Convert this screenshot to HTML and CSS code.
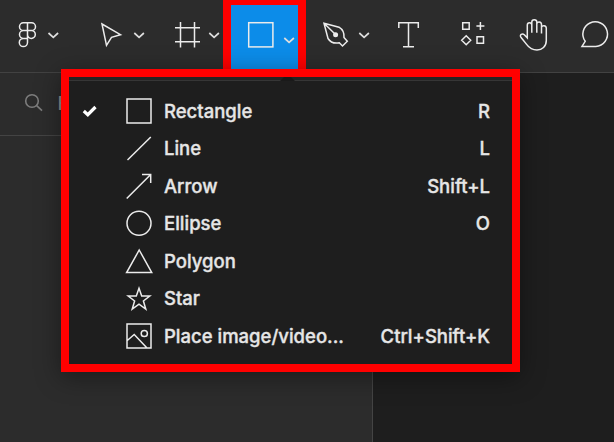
FILE: index.html
```html
<!DOCTYPE html>
<html lang="en">
<head>
<meta charset="utf-8">
<title>Shape tools</title>
<link rel="stylesheet" href="styles.css">
</head>
<body>
<div class="app">
  <header class="toolbar">
    <div class="tool tool-main"><svg width="80" height="72" viewBox="0 0 80 72"><path d="M27.500 22.800H23.400a3.900 3.900 0 0 0 0 7.800h8.200a3.900 3.900 0 0 0 0-7.800ZM27.500 22.800V42.500a4.100 4.100 0 1 1-4.100-4.100h4.100M27.500 30.600h-4.100a3.900 3.900 0 0 0 0 7.800M31.600 30.600a3.900 3.900 0 1 1-4.100 3.900"/><path class="chevron" d="m48.500 33 4.800 4.300 4.800-4.300"/></svg></div>
    <div class="tool tool-move"><svg width="75" height="72" viewBox="80 0 75 72"><path d="M102 24 120.500 34.700 111.500 37.300 106.500 45.300Z"/><path class="chevron" d="m134.300 33 4.800 4.300 4.800-4.300"/></svg></div>
    <div class="tool tool-frame"><svg width="68" height="72" viewBox="155 0 68 72"><path d="M180.500 22v25.500M194.500 22v25.500M175 27.700h25M175 41.700h25"/><path class="chevron" d="m209.300 33 4.800 4.300 4.800-4.300"/></svg></div>
    <div class="tool tool-shape"><svg width="67" height="64" viewBox="231 5 67 64"><rect x="248.700" y="22.700" width="24.200" height="24.200"/><path class="chevron" d="m284.300 38 4.800 4.300 4.800-4.300"/></svg></div>
    <div class="tool tool-pen"><svg width="74" height="72" viewBox="306 0 74 72"><path d="M324 23.200 339 27.200Q344.500 30.500 344 37.500L347.300 41.300 342.500 46 339.300 42.800Q331.500 44.200 328 38.500ZM324.500 23.700 335 34"/><circle class="solid" cx="335.600" cy="34.700" r="2.500"/><path class="chevron" d="m359.300 33 4.800 4.300 4.800-4.300"/></svg></div>
    <div class="tool tool-text"><svg width="59" height="72" viewBox="380 0 59 72"><path d="M398.800 28v-5.200h19.500V28M408.500 22.800v24M403 46.700h11"/></svg></div>
    <div class="tool tool-resources"><svg width="65" height="72" viewBox="439 0 65 72"><path d="M462.700 22.800h6.500v6.500h-6.500ZM477 36.800h6.500v6.500H477ZM480.400 22v8M476.400 26h8M466.200 35.700l4.500 4.500-4.500 4.500-4.500-4.500Z"/></svg></div>
    <div class="tool tool-hand"><svg width="60" height="72" viewBox="504 0 60 72"><path d="M527.300 37.800V25c0-3.100 4.500-3.100 4.500 0v-3c0-3 5-3 5 0v2c.2-2.800 4.700-2.600 4.700.5v3c.3-2.600 4.800-2.300 4.800.8v12.200c0 6-4.300 9.500-9.300 9.500-4.600 0-7.600-1.800-10.200-5.400l-5.900-7.400c-1.700-2.500 1.400-4.200 3.400-2.500ZM531.800 24.500v8.300M536.800 23v9.800M541.500 25.500v8"/></svg></div>
    <div class="tool tool-comment"><svg width="50" height="72" viewBox="564 0 50 72"><path d="M582 46.400 585.200 41.300A12.300 12.300 0 1 1 595.800 46.400Z"/></svg></div>
  </header>
  <div class="workspace">
    <aside class="sidebar">
      <div class="search"><svg width="20" height="20" viewBox="24 93 20 20"><circle cx="32" cy="101" r="6.300"/><path d="m36.700 105.700 5.300 5"/></svg><span>Find</span></div>
    </aside>
    <main class="canvas"></main>
  </div>
  <div class="menu">
    <div class="menu-edge"><svg width="24" height="4" viewBox="0 0 24 4"><path d="M4 4 8 0h7l4 4Z"/></svg></div>
    <div class="item"><svg class="check" viewBox="0 0 16 16"><path d="m1.800 8 4 3.700 7.700-7.700"/></svg><svg class="icon" viewBox="0 0 28 28"><rect x="2" y="2" width="24" height="24"/></svg><span>Rectangle</span><kbd>R</kbd></div>
    <div class="item"><i class="check"></i><svg class="icon" viewBox="0 0 28 28"><path d="M2.500 26 25.800 3"/></svg><span>Line</span><kbd>L</kbd></div>
    <div class="item"><i class="check"></i><svg class="icon" viewBox="0 0 28 28"><path d="M1.700 26.500 25.700 2.500M17 2.500h8.700v8.500"/></svg><span>Arrow</span><kbd>Shift+L</kbd></div>
    <div class="item"><i class="check"></i><svg class="icon" viewBox="0 0 28 28"><circle cx="14" cy="14.200" r="12"/></svg><span>Ellipse</span><kbd>O</kbd></div>
    <div class="item"><i class="check"></i><svg class="icon" viewBox="0 0 28 28"><path d="M14.200 3 26.800 25.600H1.600Z"/></svg><span>Polygon</span></div>
    <div class="item"><i class="check"></i><svg class="icon" viewBox="0 0 28 28"><path d="m14 4.200 2.700 7.800h8.100L18.400 17l2.400 8.200-6.800-5-6.800 5L9.600 17 3.200 12h8.100Z"/></svg><span>Star</span></div>
    <div class="item"><i class="check"></i><svg class="icon" viewBox="0 0 28 28"><path d="M2 2h24v24H2ZM2.300 18.500l6.900-6L22 26"/><circle cx="19.300" cy="11.500" r="3.100"/></svg><span>Place image/video...</span><kbd>Ctrl+Shift+K</kbd></div>
  </div>
</div>
</body>
</html>
```
FILE: styles.css
```css
* { box-sizing: border-box; }
body { margin: 0; background: #1e1e1e; }
.app {
  position: relative;
  width: 614px;
  height: 442px;
  display: flex;
  flex-direction: column;
  overflow: hidden;
  font-family: Inter, "Liberation Sans", sans-serif;
  font-size: 18.5px;
  font-weight: 500;
  color: #e6e6e6;
}
svg { display: block; fill: none; stroke: #ececec; stroke-width: 1.5; flex: none; }
.chevron { stroke: #dedede; stroke-width: 1.7; }
.solid { fill: #ececec; stroke: none; }
.toolbar { display: flex; height: 73px; background: #2c2c2c; border-bottom: 1px solid #424242; flex: none; }
.tool { flex: none; }
.tool-shape { width: 83px; height: 77px; padding: 5px 8px 8px; background: #f00; }
.tool-shape svg { background: #0c8ce9; }
.workspace { display: flex; flex: 1; }
.sidebar { width: 373px; background: #2c2c2c; border-right: 1px solid #444; }
.search { height: 63px; padding: 0 24px 2px; display: flex; align-items: center; gap: 13.5px; border-bottom: 1px solid #444; color: #8b8b8b; }
.search svg { stroke: #7d7d7d; stroke-width: 1.6; }
.canvas { flex: 1; background: #1e1e1e; }
.menu {
  position: absolute;
  left: 61px;
  top: 69px;
  width: 459px;
  height: 303px;
  border: 8px solid #f00;
  background: #1e1e1e;
  box-shadow: 0 5px 24px rgba(0, 0, 0, .4);
  -webkit-text-stroke: .35px #e6e6e6;
}
.menu-edge { height: 4px; margin-bottom: 11px; padding-left: 207px; background: #242424; border-bottom: 1px solid #363636; }
.menu-edge path { fill: #1a1a1a; stroke: none; }
.item { height: 37.5px; padding: 0 22px 0 13px; display: flex; align-items: center; line-height: 24px; white-space: nowrap; }
.check { width: 16px; height: 16px; margin-right: 27px; }
.check path { stroke: #fff; stroke-width: 3.2; }
.icon { width: 28px; height: 28px; margin-right: 11px; }
kbd { margin-left: auto; font: inherit; }
```
